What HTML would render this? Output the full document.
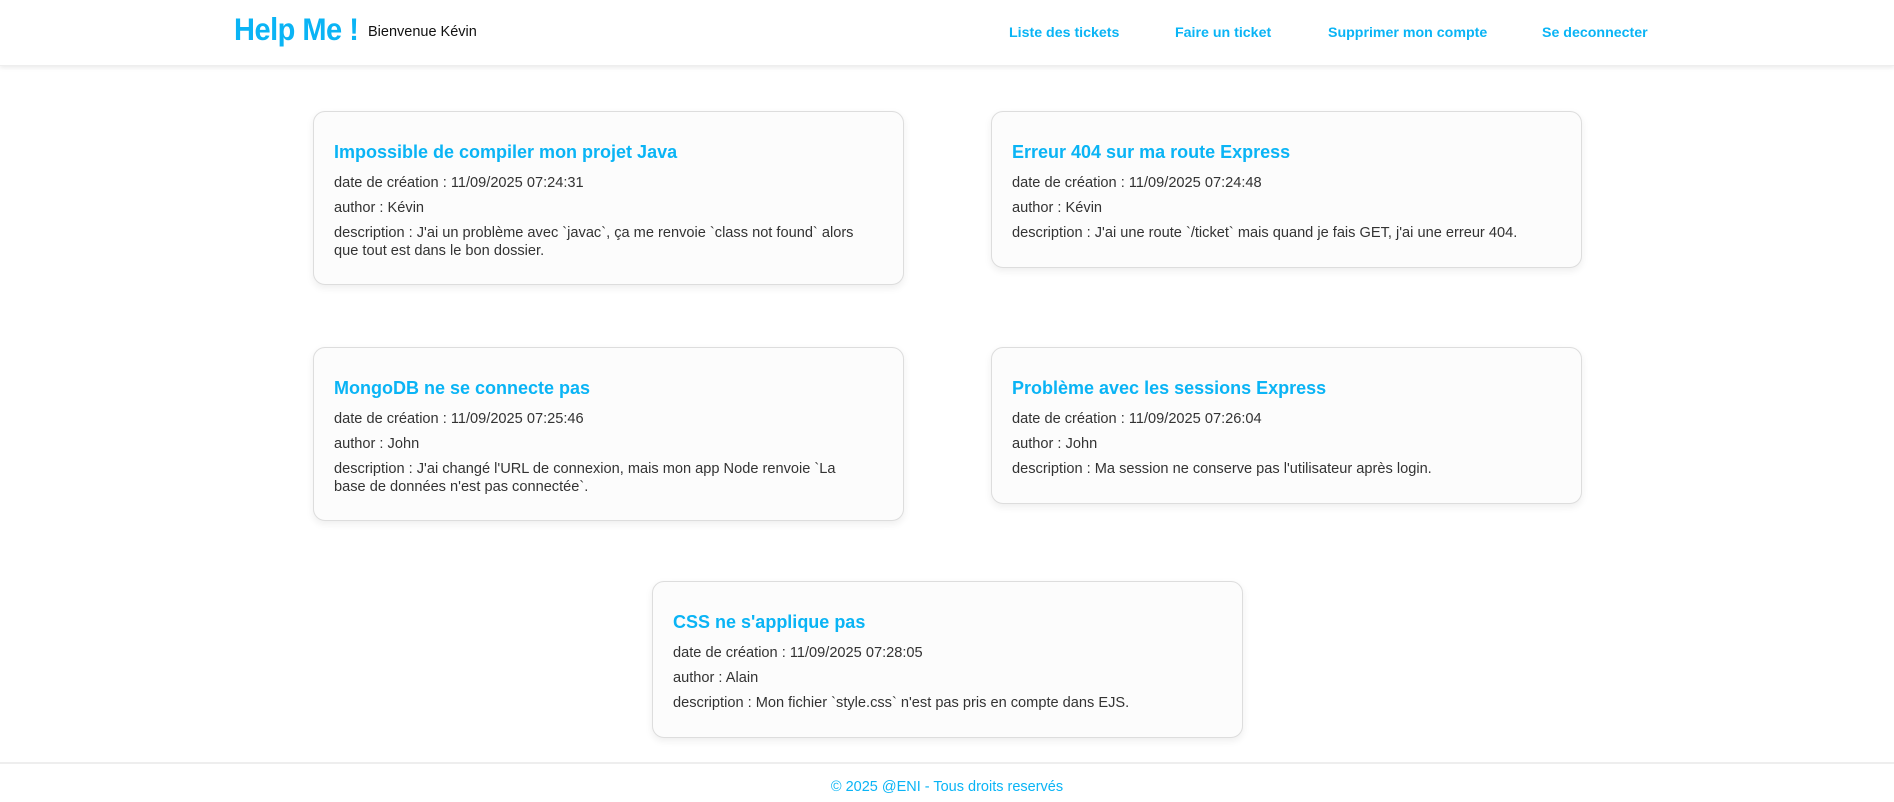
<!DOCTYPE html>
<html><head><meta charset="utf-8"><style>
*{box-sizing:border-box;margin:0;padding:0}
body{width:1894px;height:802px;background:#fff;font-family:"Liberation Sans",Arial,sans-serif;position:relative;overflow:hidden}
header{position:absolute;left:0;top:0;width:1894px;height:66px;background:#fff;box-shadow:0 2px 4px rgba(0,0,0,.08);border-bottom:1px solid #eee}
.logo{position:absolute;left:234px;top:13px;font-size:29px;letter-spacing:-0.5px;font-weight:bold;color:#0ab4f5;transform:scaleY(1.08);transform-origin:top left}
.welcome{position:absolute;left:368px;top:23px;font-size:14.5px;color:#111}
nav a{position:absolute;top:24px;font-size:14.2px;font-weight:bold;color:#0ab4f5;text-decoration:none}
.card{position:absolute;width:591px;background:#fcfcfc;border:1px solid #ddd;border-radius:12px;box-shadow:0 3px 8px rgba(0,0,0,.07);padding:29px 34px 20px 20px}
.card h3{font-size:18px;line-height:22px;color:#0ab4f5;margin-bottom:11px}
.card p{font-size:14.6px;line-height:18px;color:#333;margin-bottom:7px}
footer{position:absolute;left:0;top:762px;width:1894px;height:40px;border-top:2px solid #eee;text-align:center;color:#0ab4f5;font-size:14.5px;padding-top:15px}
</style></head><body>
<header>
<div class="logo">Help Me !</div>
<div class="welcome" style="top:24px">Bienvenue Kévin</div>
<nav>
<a style="left:1009px;top:25px">Liste des tickets</a>
<a style="left:1175px;top:25px">Faire un ticket</a>
<a style="left:1328px;top:25px">Supprimer mon compte</a>
<a style="left:1542px;top:25px">Se deconnecter</a>
</nav>
</header>
<div class="card" style="left:313px;top:111px;height:174px">
<h3>Impossible de compiler mon projet Java</h3>
<p>date de création : 11/09/2025 07:24:31</p>
<p>author : Kévin</p>
<p>description : J'ai un problème avec `javac`, ça me renvoie `class not found` alors que tout est dans le bon dossier.</p>
</div>
<div class="card" style="left:991px;top:111px;height:157px">
<h3>Erreur 404 sur ma route Express</h3>
<p>date de création : 11/09/2025 07:24:48</p>
<p>author : Kévin</p>
<p>description : J'ai une route `/ticket` mais quand je fais GET, j'ai une erreur 404.</p>
</div>
<div class="card" style="left:313px;top:347px;height:174px">
<h3>MongoDB ne se connecte pas</h3>
<p>date de création : 11/09/2025 07:25:46</p>
<p>author : John</p>
<p>description : J'ai changé l'URL de connexion, mais mon app Node renvoie `La base de données n'est pas connectée`.</p>
</div>
<div class="card" style="left:991px;top:347px;height:157px">
<h3>Problème avec les sessions Express</h3>
<p>date de création : 11/09/2025 07:26:04</p>
<p>author : John</p>
<p>description : Ma session ne conserve pas l'utilisateur après login.</p>
</div>
<div class="card" style="left:652px;top:581px;height:157px">
<h3>CSS ne s'applique pas</h3>
<p>date de création : 11/09/2025 07:28:05</p>
<p>author : Alain</p>
<p>description : Mon fichier `style.css` n'est pas pris en compte dans EJS.</p>
</div>
<footer>© 2025 @ENI - Tous droits reservés</footer>
</body></html>
